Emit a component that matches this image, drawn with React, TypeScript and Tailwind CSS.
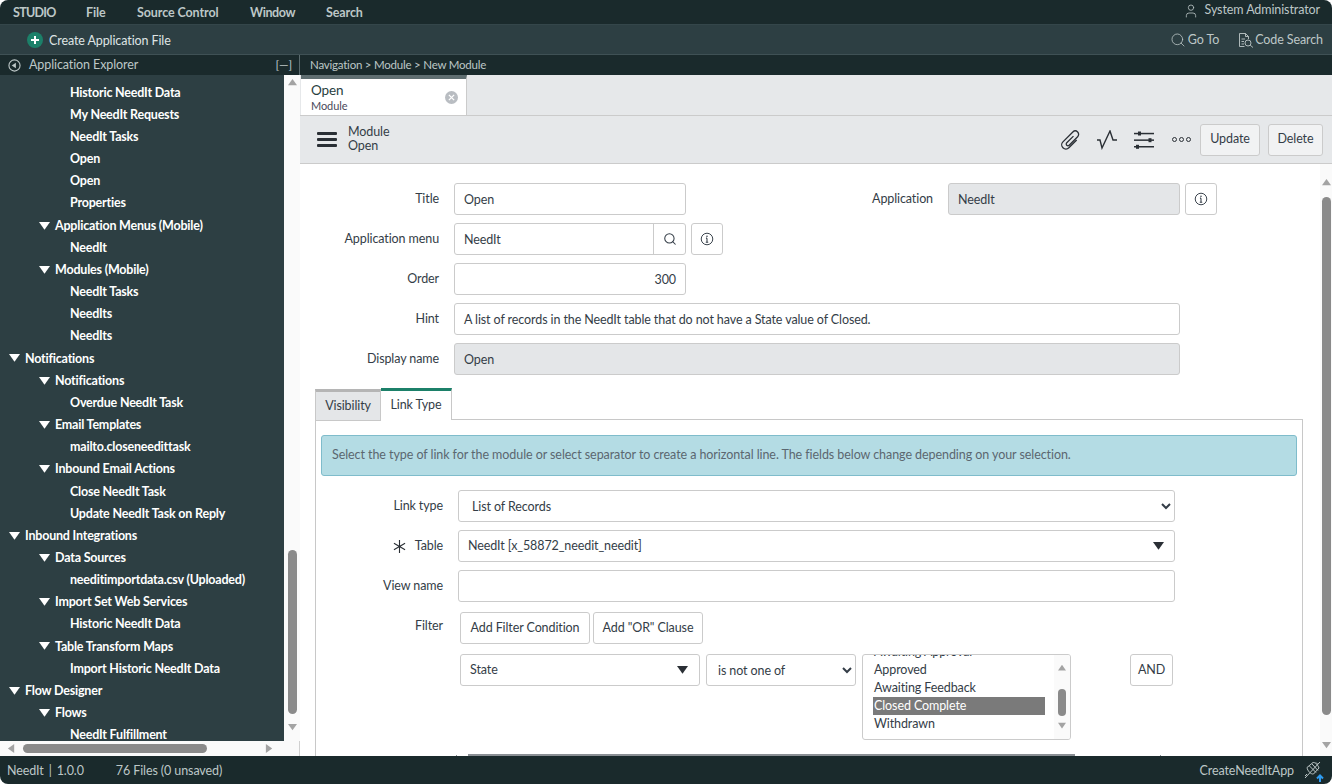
import { Search, User } from "lucide-react";

type Row = { label: string; level: 0 | 1 | 2 };

const treeRows: Row[] = [
  { label: "Historic NeedIt Data", level: 2 },
  { label: "My NeedIt Requests", level: 2 },
  { label: "NeedIt Tasks", level: 2 },
  { label: "Open", level: 2 },
  { label: "Open", level: 2 },
  { label: "Properties", level: 2 },
  { label: "Application Menus (Mobile)", level: 1 },
  { label: "NeedIt", level: 2 },
  { label: "Modules (Mobile)", level: 1 },
  { label: "NeedIt Tasks", level: 2 },
  { label: "NeedIts", level: 2 },
  { label: "NeedIts", level: 2 },
  { label: "Notifications", level: 0 },
  { label: "Notifications", level: 1 },
  { label: "Overdue NeedIt Task", level: 2 },
  { label: "Email Templates", level: 1 },
  { label: "mailto.closeneedittask", level: 2 },
  { label: "Inbound Email Actions", level: 1 },
  { label: "Close NeedIt Task", level: 2 },
  { label: "Update NeedIt Task on Reply", level: 2 },
  { label: "Inbound Integrations", level: 0 },
  { label: "Data Sources", level: 1 },
  { label: "needitimportdata.csv (Uploaded)", level: 2 },
  { label: "Import Set Web Services", level: 1 },
  { label: "Historic NeedIt Data", level: 2 },
  { label: "Table Transform Maps", level: 1 },
  { label: "Import Historic NeedIt Data", level: 2 },
  { label: "Flow Designer", level: 0 },
  { label: "Flows", level: 1 },
  { label: "NeedIt Fulfillment", level: 2 },
];

function Tri({ dir, className }: { dir: "up" | "down" | "left" | "right"; className: string }) {
  const pts = {
    up: "5,1 10,8 0,8",
    down: "0,1 10,1 5,8",
    left: "8,0 8,10 1,5",
    right: "1,0 1,10 8,5",
  }[dir];
  return (
    <svg viewBox="0 0 10 10" className={className} fill="currentColor">
      <polygon points={pts} />
    </svg>
  );
}

function TreeRow({ row }: { row: Row }) {
  if (row.level === 2) {
    return (
      <div className="h-[22.17px] pl-[70px] flex items-center text-white font-bold tracking-[-0.2px] whitespace-nowrap">
        {row.label}
      </div>
    );
  }
  return (
    <div
      className={`h-[22.17px] flex items-center text-white font-bold tracking-[-0.2px] whitespace-nowrap ${
        row.level === 0 ? "pl-[9px]" : "pl-[39px]"
      }`}
    >
      <Tri dir="down" className="w-[11px] h-[11px] mr-[5px] text-white" />
      {row.label}
    </div>
  );
}

function Label({ children, w = "w-[124px]" }: { children: React.ReactNode; w?: string }) {
  return <div className={`${w} shrink-0 text-right text-[#343d47]`}>{children}</div>;
}

function Field({
  children,
  w,
  muted,
  right,
}: {
  children: React.ReactNode;
  w: string;
  muted?: boolean;
  right?: boolean;
}) {
  return (
    <div
      className={`${w} h-[32px] shrink-0 border border-[#cbcbcb] rounded-[3px] px-[9px] pt-[3px] flex items-center text-[#343d47] ${
        muted ? "bg-[#e4e6e8]" : "bg-white"
      } ${right ? "justify-end" : ""}`}
    >
      {children}
    </div>
  );
}

function InfoIcon() {
  return (
    <svg viewBox="0 0 16 16" className="w-[14px] h-[14px] text-[#343d47]" fill="none" stroke="currentColor">
      <circle cx="8" cy="8" r="6.6" strokeWidth="1.1" />
      <path d="M8 7v4.4M6.6 11.6h2.8M6.8 7h1.2" strokeWidth="1.2" />
      <circle cx="8" cy="4.8" r="0.9" fill="currentColor" stroke="none" />
    </svg>
  );
}

function InfoButton() {
  return (
    <div className="w-[32px] h-[32px] shrink-0 border border-[#cbcbcb] rounded-[3px] bg-white flex items-center justify-center">
      <InfoIcon />
    </div>
  );
}

function Button({ children, className = "" }: { children: React.ReactNode; className?: string }) {
  return (
    <div
      className={`h-[32px] shrink-0 border border-[#cbcbcb] rounded-[3px] flex items-center justify-center text-[#343d47] ${className}`}
    >
      {children}
    </div>
  );
}

function Scrollbars() {
  return (
    <div className="w-[16px] shrink-0 bg-[#fafafa] flex flex-col items-center">
      <Tri dir="up" className="w-[9px] h-[9px] mt-[3px] text-[#a3a3a3]" />
      <div className="w-[9px] h-[164px] mt-[463px] rounded-[5px] bg-[#8a8a8a]" />
      <Tri dir="down" className="w-[9px] h-[9px] mt-[9px] text-[#a3a3a3]" />
    </div>
  );
}

export default function App() {
  return (
    <div className="w-[1332px] h-[784px] overflow-hidden rounded-[8px] flex flex-col text-[12.5px] tracking-[-0.1px] font-['Lato','Noto_Sans',sans-serif]">
      {/* studio menu bar */}
      <header className="h-[25px] shrink-0 bg-[#1a2a2c] border-b border-[#34464a] flex items-center text-[#bdc7c7] font-bold pt-[3px]">
        <span className="ml-[13px] w-[72px] tracking-[-0.7px]">STUDIO</span>
        <span className="ml-px w-[51px]">File</span>
        <span className="w-[113px]">Source Control</span>
        <span className="w-[76px] tracking-[-0.4px]">Window</span>
        <span>Search</span>
        <span className="ml-auto mr-[12px] flex items-center gap-[6px] font-normal -translate-y-[3px]">
          <User size={16} strokeWidth={1.2} />
          System Administrator
        </span>
      </header>

      {/* toolbar */}
      <div className="h-[30px] shrink-0 bg-[#2d3f43] border-b border-[#3f5155] flex items-center text-[#dfe4e4]">
        <span className="ml-[27px] w-[16px] h-[16px] rounded-full bg-[#1c8069] flex items-center justify-center">
          <svg viewBox="0 0 10 10" className="w-[10px] h-[10px]" stroke="white" strokeWidth="2">
            <path d="M5 1v8M1 5h8" />
          </svg>
        </span>
        <span className="ml-[6px] pt-[3px]">Create Application File</span>
        <span className="ml-auto flex items-center text-[#bdc7c7]">
          <Search size={16} strokeWidth={1.2} />
          <span className="ml-[2px] pt-[2px]">Go To</span>
          <svg viewBox="0 0 16 16" className="w-[16px] h-[16px] ml-[19px]" fill="none" stroke="currentColor" strokeWidth="0.9">
            <path d="M6.5 14.5H1.5V1.5H7.5L10.5 4.5V7M7.5 1.5V4.5H10.5M3.5 7H7M3.5 9.5H6M3.5 12H6" />
            <circle cx="10" cy="11" r="3" />
            <path d="M12.2 13.2L15 15.5" />
          </svg>
          <span className="ml-px mr-[9px] pt-[2px]">Code Search</span>
        </span>
      </div>

      {/* strip */}
      <div className="h-[20px] shrink-0 bg-[#1a2a2c] flex text-[#bdc7c7]">
        <div className="w-[300px] shrink-0 flex items-center border-r border-[#5b6b6e]">
          <svg viewBox="0 0 14 14" className="ml-[8px] w-[13px] h-[13px]" fill="none" stroke="currentColor">
            <circle cx="7" cy="7" r="6" strokeWidth="1.2" />
            <polygon points="4,7 8.5,4 8.5,10" fill="currentColor" stroke="none" />
          </svg>
          <span className="ml-[8px]">Application Explorer</span>
          <span className="ml-auto mr-[7px] text-[12px]">[—]</span>
        </div>
        <div className="pl-[10px] flex items-center text-[11.5px] tracking-[-0.22px]">Navigation &gt; Module &gt; New Module</div>
      </div>

      {/* main */}
      <div className="flex-1 min-h-0 flex">
        <aside className="w-[300px] shrink-0 flex flex-col border-r border-[#d0d0d0]">
          <div className="flex-1 min-h-0 flex">
            <div className="w-[284px] shrink-0 bg-[#2d3f43] overflow-hidden pt-[7px]">
              {treeRows.map((row, i) => (
                <TreeRow key={i} row={row} />
              ))}
            </div>
            <Scrollbars />
          </div>
          <div className="h-[15px] shrink-0 bg-[#fafafa] flex items-center">
            <Tri dir="left" className="ml-[7px] w-[9px] h-[9px] text-[#a3a3a3]" />
            <div className="ml-[7px] w-[184px] h-[9px] rounded-[5px] bg-[#8a8a8a]" />
            <Tri dir="right" className="ml-[58px] w-[9px] h-[9px] text-[#a3a3a3]" />
          </div>
        </aside>

        <main className="flex-1 min-w-0 flex flex-col bg-white">
          {/* tabs */}
          <div className="h-[41px] shrink-0 bg-[#e6e8ea] border-b border-[#cbcbcb] flex">
            <div className="ml-px w-[166px] h-[40px] bg-white border-t-[4px] border-t-[#5f6e71] border-r border-r-[#cbcbcb] pl-[10px] pr-[8px] flex items-center justify-between">
              <div className="flex flex-col leading-[15px] pt-[1px]">
                <span className="text-[13.5px] text-[#293e40]">Open</span>
                <span className="text-[11px] text-[#4a4a5a]">Module</span>
              </div>
              <span className="w-[13px] h-[13px] rounded-full bg-[#b9bdc2] flex items-center justify-center">
                <svg viewBox="0 0 8 8" className="w-[7px] h-[7px]" stroke="white" strokeWidth="1.5">
                  <path d="M1 1l6 6M7 1l-6 6" />
                </svg>
              </span>
            </div>
          </div>

          {/* form header */}
          <div className="h-[48px] shrink-0 bg-[#e6e8ea] border-b border-[#cbcbcb] flex items-center text-[#343d47]">
            <div className="ml-[17px] w-[20px] flex flex-col gap-[3px]">
              <span className="h-[3px] bg-[#2a2f35] rounded-[1px]" />
              <span className="h-[3px] bg-[#2a2f35] rounded-[1px]" />
              <span className="h-[3px] bg-[#2a2f35] rounded-[1px]" />
            </div>
            <div className="ml-[11px] flex flex-col leading-[14px] -translate-y-px">
              <span>Module</span>
              <span>Open</span>
            </div>
            <div className="ml-auto flex items-center pr-[9px]">
              <svg viewBox="0 0 24 24" className="w-[24px] h-[24px] text-[#2a2f35]" fill="none" stroke="currentColor" strokeWidth="1.3">
                <path transform="rotate(45 12 12)" d="M11 7.5V17a1.7 1.7 0 0 0 3.4 0V5a3.4 3.4 0 0 0-6.8 0V19a4.2 4.2 0 0 0 8.4 0V8" />
              </svg>
              <svg viewBox="0 0 22 20" className="ml-[13px] w-[22px] h-[20px] text-[#2a2f35]" fill="none" stroke="currentColor" strokeWidth="1.4">
                <path d="M1 10h3l2 8 8-17 3 9h4" />
              </svg>
              <svg viewBox="0 0 20 20" className="ml-[16px] w-[20px] h-[20px] text-[#2a2f35]" fill="currentColor">
                <rect x="0" y="2.8" width="20" height="1.5" />
                <rect x="0" y="9.4" width="20" height="1.5" />
                <rect x="0" y="16" width="20" height="1.5" />
                <rect x="4" y="1.5" width="3" height="4" />
                <rect x="14.5" y="8.2" width="3" height="4" />
                <rect x="2" y="14.8" width="3" height="4" />
              </svg>
              <span className="ml-[18px] flex gap-[2px]">
                <i className="w-[5px] h-[5px] rounded-full border border-[#2a2f35]" />
                <i className="w-[5px] h-[5px] rounded-full border border-[#2a2f35]" />
                <i className="w-[5px] h-[5px] rounded-full border border-[#2a2f35]" />
              </span>
              <Button className="ml-[9px] w-[60px] bg-[#f1f2f3]">Update</Button>
              <Button className="ml-[8px] w-[55px] bg-[#f1f2f3]">Delete</Button>
            </div>
          </div>

          {/* form */}
          <div className="flex-1 min-h-0 flex">
            <div className="flex-1 min-w-0 overflow-hidden pt-[19px] pl-[15px] flex flex-col">
              <div className="flex flex-col gap-[8px]">
                <div className="flex items-center">
                  <Label>Title</Label>
                  <div className="ml-[15px]">
                    <Field w="w-[232px]">Open</Field>
                  </div>
                  <Label w="w-[247px]">Application</Label>
                  <div className="ml-[15px]">
                    <Field w="w-[232px]" muted>
                      NeedIt
                    </Field>
                  </div>
                  <div className="ml-[5px]">
                    <InfoButton />
                  </div>
                </div>
                <div className="flex items-center">
                  <Label>Application menu</Label>
                  <div className="ml-[15px] w-[232px] h-[32px] border border-[#cbcbcb] rounded-[3px] flex items-center text-[#343d47]">
                    <span className="flex-1 pl-[9px] pt-[3px]">NeedIt</span>
                    <span className="w-[32px] h-full border-l border-[#cbcbcb] flex items-center justify-center">
                      <Search size={14} strokeWidth={1.8} />
                    </span>
                  </div>
                  <div className="ml-[5px]">
                    <InfoButton />
                  </div>
                </div>
                <div className="flex items-center">
                  <Label>Order</Label>
                  <div className="ml-[15px]">
                    <Field w="w-[232px]" right>
                      300
                    </Field>
                  </div>
                </div>
                <div className="flex items-center">
                  <Label>Hint</Label>
                  <div className="ml-[15px]">
                    <Field w="w-[726px]">A list of records in the NeedIt table that do not have a State value of Closed.</Field>
                  </div>
                </div>
                <div className="flex items-center">
                  <Label>Display name</Label>
                  <div className="ml-[15px]">
                    <Field w="w-[726px]" muted>
                      Open
                    </Field>
                  </div>
                </div>
              </div>

              <div className="mt-[13px] flex h-[32px] text-[#343d47]">
                <div className="w-[66px] h-[32px] mt-px bg-[#e4e6e8] border-t-[3px] border-t-[#b5b5b5] border-x border-b border-[#c8c8c8] flex items-center justify-center">
                  Visibility
                </div>
                <div className="w-[71px] h-[32px] bg-white border-t-[3px] border-t-[#1c8069] border-r border-[#c8c8c8] flex items-center justify-center">
                  Link Type
                </div>
                <div className="w-[851px] h-[32px] border-b border-[#c8c8c8]" />
              </div>

              <div className="w-[988px] flex-1 border-x border-[#c8c8c8] px-[5px] pt-[15px]">
                <div className="h-[41px] bg-[#b4dce4] border border-[#7fbccb] rounded-[3px] flex items-center pl-[10px] text-[#5b6770] tracking-[-0.07px]">
                  Select the type of link for the module or select separator to create a horizontal line. The fields below change depending on your selection.
                </div>

                <div className="mt-[14px] flex flex-col gap-[8px] text-[#343d47]">
                  <div className="flex items-center">
                    <div className="w-[122px] shrink-0 text-right">Link type</div>
                    <select className="ml-[15px] w-[717px] h-[32px] border border-[#cbcbcb] rounded-[3px] bg-white pl-[9px]" defaultValue="List of Records">
                      <option>List of Records</option>
                    </select>
                  </div>
                  <div className="flex items-center">
                    <div className="w-[122px] shrink-0 text-right flex items-center justify-end">
                      <svg viewBox="0 0 14 14" className="w-[13px] h-[13px] mr-[9px]" stroke="#2a2f35" strokeWidth="1.2">
                        <path d="M7 0v14M1 3.5l12 7M13 3.5l-12 7" />
                      </svg>
                      Table
                    </div>
                    <div className="ml-[15px] w-[717px] h-[32px] border border-[#cbcbcb] rounded-[3px] pl-[9px] pr-[10px] flex items-center justify-between">
                      NeedIt [x_58872_needit_needit]
                      <Tri dir="down" className="w-[11px] h-[11px] text-[#2a2f35]" />
                    </div>
                  </div>
                  <div className="flex items-center">
                    <div className="w-[122px] shrink-0 text-right">View name</div>
                    <div className="ml-[15px] w-[717px] h-[32px] border border-[#cbcbcb] rounded-[3px]" />
                  </div>
                  <div className="flex mt-[2px]">
                    <div className="w-[122px] shrink-0 text-right pt-[5px]">Filter</div>
                    <div className="ml-[17px] flex flex-col gap-[10px]">
                      <div className="flex gap-[3px]">
                        <Button className="w-[130px]">Add Filter Condition</Button>
                        <Button className="w-[110px]">Add "OR" Clause</Button>
                      </div>
                      <div className="flex items-start">
                        <div className="w-[240px] h-[32px] border border-[#cbcbcb] rounded-[3px] pl-[9px] pr-[11px] flex items-center justify-between">
                          State
                          <Tri dir="down" className="w-[11px] h-[11px] text-[#2a2f35]" />
                        </div>
                        <select className="ml-[6px] w-[150px] h-[32px] border border-[#cbcbcb] rounded-[3px] bg-white pl-[7px]" defaultValue="is not one of">
                          <option>is not one of</option>
                        </select>
                        <div className="ml-[6px] w-[209px] h-[86px] border border-[#cbcbcb] rounded-[3px] overflow-hidden flex">
                          <div className="flex-1 overflow-hidden pl-[10px] pr-[9px] leading-[18px]">
                            <div className="-mt-[12px] pl-px">Awaiting Approval</div>
                            <div className="pl-px">Approved</div>
                            <div className="pl-px">Awaiting Feedback</div>
                            <div className="pl-px bg-[#7a7a7a] text-white">Closed Complete</div>
                            <div className="pl-px">Withdrawn</div>
                          </div>
                          <div className="w-[16px] shrink-0 bg-[#fafafa] flex flex-col items-center">
                            <Tri dir="up" className="w-[8px] h-[8px] mt-[9px] text-[#a3a3a3]" />
                            <div className="w-[8px] h-[27px] mt-[17px] rounded-[4px] bg-[#8a8a8a]" />
                            <Tri dir="down" className="w-[8px] h-[8px] mt-[6px] text-[#a3a3a3]" />
                          </div>
                        </div>
                        <Button className="ml-[59px] w-[43px]">AND</Button>
                      </div>
                      {/* top edge of the next filter block, cut off by the fold */}
                      <div className="mt-[4px] -ml-[4px] w-[705px] flex items-start">
                        <span className="mt-px w-px h-px bg-[#8a8f94]" />
                        <span className="ml-[11px] w-[607px] h-[2px] bg-[#8a8f94]" />
                        <span className="ml-auto mt-px w-px h-px bg-[#8a8f94]" />
                      </div>
                    </div>
                  </div>
                </div>
              </div>
            </div>
            <div className="w-[12px] shrink-0 bg-[#fafafa] flex flex-col items-center">
              <Tri dir="up" className="w-[9px] h-[9px] mt-[14px] text-[#a3a3a3]" />
              <div className="w-[9px] h-[518px] mt-[10px] rounded-[5px] bg-[#8a8a8a]" />
              <Tri dir="down" className="w-[9px] h-[9px] mt-[26px] text-[#a3a3a3]" />
            </div>
          </div>
        </main>
      </div>

      {/* status bar */}
      <footer className="h-[28px] shrink-0 bg-[#1a2a2c] flex items-center text-[#bdc7c7] pt-[2px]">
        <span className="ml-[7px]">NeedIt</span>
        <span className="ml-[5px] mr-[5px]">|</span>
        <span>1.0.0</span>
        <span className="ml-[32px]">76 Files (0 unsaved)</span>
        <span className="ml-auto">CreateNeedItApp</span>
        <span className="relative ml-[10px] mr-[11px] w-[17px] h-[18px] -translate-y-px">
          <svg viewBox="0 0 17 18" className="w-[17px] h-[18px]" fill="none" stroke="currentColor" strokeWidth="1">
            <path d="M3 6.5L9 1.5C11 1 14 4 15 7L9.5 13C7 13.5 3.5 10 3 6.5Z" />
            <path d="M1 17L16 1M5.5 5L12 11.5M8 3L14 9.5M3 13l-2 2M12 1.5l1.5 1.5" />
          </svg>
          <svg viewBox="0 0 8 8" className="absolute right-[-3px] bottom-[-3px] w-[8px] h-[8px]" stroke="#2e9bf0" strokeWidth="2" fill="none">
            <path d="M4 8V2M1 4.5L4 1.5l3 3" />
          </svg>
        </span>
      </footer>
    </div>
  );
}
